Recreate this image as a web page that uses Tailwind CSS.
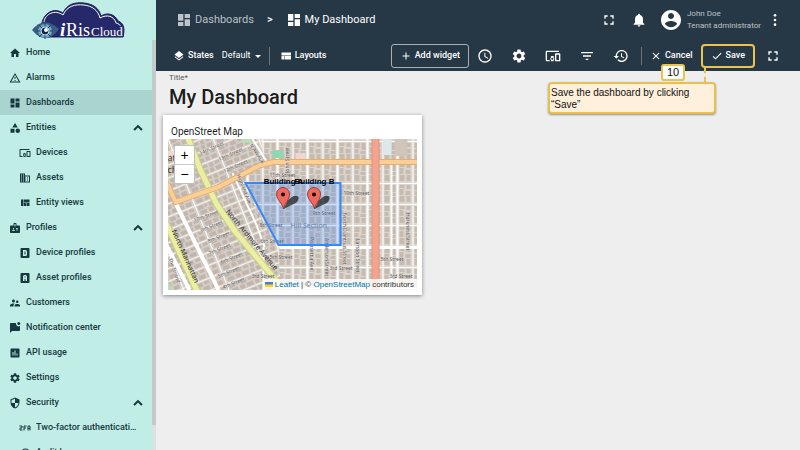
<!DOCTYPE html>
<html lang="en">
  <head>
    <meta charset="utf-8" />
    <meta content="width=device-width, initial-scale=1.0" name="viewport" />
    <title>My Dashboard</title>
    <script src="https://cdn.jsdelivr.net/npm/@tailwindcss/browser@4"></script>
  </head>
  <body class="flex h-screen overflow-hidden bg-[#eeeeee] font-['Roboto',sans-serif]">
    <!-- Icon set -->
    <svg class="hidden">
      <symbol id="home" viewBox="0 0 24 24"><path d="M10 20v-6h4v6h5v-8h3L12 3 2 12h3v8z" /></symbol>
      <symbol id="warning" viewBox="0 0 24 24"><path d="M12 5.99L19.53 19H4.47L12 5.99M12 2L1 21h22L12 2zm1 14h-2v2h2v-2zm0-6h-2v4h2v-4z" /></symbol>
      <symbol id="dashboard" viewBox="0 0 24 24"><path d="M3 13h8V3H3v10zm0 8h8v-6H3v6zm10 0h8V11h-8v10zm0-18v6h8V3h-8z" /></symbol>
      <symbol id="category" viewBox="0 0 24 24"><path d="M12 2l-5.5 9h11zM3 13.5h8v8H3z" /><circle cx="17.5" cy="17.5" r="4.5" /></symbol>
      <symbol id="devices" viewBox="0 0 24 24"><path d="M3 6h18V4H3c-1.1 0-2 .9-2 2v12c0 1.1.9 2 2 2h4v-2H3V6zm10 6H9v1.78c-.61.55-1 1.33-1 2.22s.39 1.67 1 2.22V20h4v-1.78c.61-.55 1-1.34 1-2.22s-.39-1.67-1-2.22V12zm-2 5.5c-.83 0-1.5-.67-1.5-1.5s.67-1.5 1.5-1.5 1.5.67 1.5 1.5-.67 1.5-1.5 1.5zM22 8h-6c-.5 0-1 .5-1 1v10c0 .5.5 1 1 1h6c.5 0 1-.5 1-1V9c0-.5-.5-1-1-1zm-1 10h-4v-8h4v8z" /></symbol>
      <symbol id="domain" viewBox="0 0 24 24"><path d="M12 7V3H2v18h20V7H12zM6 19H4v-2h2v2zm0-4H4v-2h2v2zm0-4H4V9h2v2zm0-4H4V5h2v2zm4 12H8v-2h2v2zm0-4H8v-2h2v2zm0-4H8V9h2v2zm0-4H8V5h2v2zm10 12h-8v-2h2v-2h-2v-2h2v-2h-2V9h8v10zm-2-8h-2v2h2v-2zm0 4h-2v2h2v-2z" /></symbol>
      <symbol id="quilt" viewBox="0 0 24 24"><path d="M10 18h5v-6h-5v6zm-6 0h5V5H4v13zm12 0h5v-6h-5v6zM10 5v6h11V5H10z" /></symbol>
      <symbol id="badge" viewBox="0 0 24 24"><path d="M20 7h-5V4c0-1.1-.9-2-2-2h-2c-1.1 0-2 .9-2 2v3H4c-1.1 0-2 .9-2 2v11c0 1.1.9 2 2 2h16c1.1 0 2-.9 2-2V9c0-1.1-.9-2-2-2zM9 12c.83 0 1.5.67 1.5 1.5S9.83 15 9 15s-1.5-.67-1.5-1.5S8.17 12 9 12zm3 6H6v-.75c0-1 2-1.5 3-1.5s3 .5 3 1.5V18zm1-9h-2V4h2v5zm5 7.5h-4V15h4v1.5zm0-3h-4V12h4v1.5z" /></symbol>
      <symbol id="alpha-d" viewBox="0 0 24 24"><path fill-rule="evenodd" d="M5 2h14a2 2 0 0 1 2 2v16a2 2 0 0 1-2 2H5a2 2 0 0 1-2-2V4a2 2 0 0 1 2-2zm3 4v12h5a3 3 0 0 0 3-3V9a3 3 0 0 0-3-3zm3 3h2v6h-2z" /></symbol>
      <symbol id="alpha-a" viewBox="0 0 24 24"><path fill-rule="evenodd" d="M5 2h14a2 2 0 0 1 2 2v16a2 2 0 0 1-2 2H5a2 2 0 0 1-2-2V4a2 2 0 0 1 2-2zm6 4a3 3 0 0 0-3 3v9h3v-4h2v4h3V9a3 3 0 0 0-3-3zm0 3h2v2h-2z" /></symbol>
      <symbol id="people" viewBox="0 0 24 24"><path d="M16.5 12c1.38 0 2.49-1.12 2.49-2.5S17.88 7 16.5 7 14 8.12 14 9.5s1.12 2.5 2.5 2.5zM9 11c1.66 0 2.99-1.34 2.99-3S10.66 5 9 5 6 6.34 6 8s1.34 3 3 3zm7.5 3c-1.83 0-5.5.92-5.5 2.75V19h11v-2.25c0-1.83-3.67-2.75-5.5-2.75zM9 13c-2.33 0-7 1.17-7 3.5V19h7v-2.25c0-.85.33-2.34 2.37-3.47C10.5 13.1 9.66 13 9 13z" /></symbol>
      <symbol id="chat" viewBox="0 0 24 24"><path d="M22 7.5V16c0 1.1-.9 2-2 2H6l-4 4V4c0-1.1.9-2 2-2h10.1A5 5 0 0 0 22 7.5z" /><circle cx="19.5" cy="3" r="3" /></symbol>
      <symbol id="chart" viewBox="0 0 24 24"><path d="M19 3H5c-1.1 0-2 .9-2 2v14c0 1.1.9 2 2 2h14c1.1 0 2-.9 2-2V5c0-1.1-.9-2-2-2zM9 17H7v-7h2v7zm4 0h-2V7h2v10zm4 0h-2v-4h2v4z" /></symbol>
      <symbol id="settings" viewBox="0 0 24 24"><path d="M19.14 12.94c.04-.3.06-.61.06-.94 0-.32-.02-.64-.07-.94l2.03-1.58c.18-.14.23-.41.12-.61l-1.92-3.32c-.12-.22-.37-.29-.59-.22l-2.39.96c-.5-.38-1.03-.7-1.62-.94l-.36-2.54c-.04-.24-.24-.41-.48-.41h-3.84c-.24 0-.43.17-.47.41l-.36 2.54c-.59.24-1.13.57-1.62.94l-2.39-.96c-.22-.08-.47 0-.59.22L2.74 8.87c-.12.21-.08.47.12.61l2.03 1.58c-.05.3-.09.63-.09.94s.02.64.07.94l-2.03 1.58c-.18.14-.23.41-.12.61l1.92 3.32c.12.22.37.29.59.22l2.39-.96c.5.38 1.03.7 1.62.94l.36 2.54c.05.24.24.41.48.41h3.84c.24 0 .44-.17.47-.41l.36-2.54c.59-.24 1.13-.56 1.62-.94l2.39.96c.22.08.47 0 .59-.22l1.92-3.32c.12-.22.07-.47-.12-.61l-2.01-1.58zM12 15.6c-1.98 0-3.6-1.62-3.6-3.6s1.62-3.6 3.6-3.6 3.6 1.62 3.6 3.6-1.62 3.6-3.6 3.6z" /></symbol>
      <symbol id="security" viewBox="0 0 24 24"><path d="M12 1L3 5v6c0 5.55 3.84 10.74 9 12 5.16-1.26 9-6.45 9-12V5l-9-4zm0 10.99h7c-.53 4.12-3.28 7.79-7 8.94V12H5V6.3l7-3.11v8.8z" /></symbol>
      <symbol id="two-fa" viewBox="0 0 24 24"><path fill="none" stroke="currentColor" stroke-width="2" d="M1 8h5v4H2v4h5M15 8h-5v9M10 12h4M18 17V8h4v9M18 13h4" /></symbol>
      <symbol id="audit" viewBox="0 0 24 24"><path d="M13 3a9 9 0 0 0-9 9H1l4 4 4-4H6a7 7 0 1 1 7 7v2a9 9 0 0 0 0-18z" /></symbol>
      <symbol id="up" viewBox="0 0 24 24"><path d="M12 7l-7 7 2.2 2.2L12 11.4l4.800 4.8L19 14z" /></symbol>
      <symbol id="layers" viewBox="0 0 24 24"><path d="M11.99 18.54l-7.37-5.73L3 14.07l9 7 9-7-1.63-1.27-7.38 5.74zM12 16l7.36-5.73L21 9l-9-7-9 7 1.63 1.27L12 16z" /></symbol>
      <symbol id="compact" viewBox="0 0 24 24"><path d="M3 19h6v-7H3v7zm7 0h12v-7H10v7zM3 5v6h19V5H3z" /></symbol>
      <symbol id="add" viewBox="0 0 24 24"><path d="M19 13h-6v6h-2v-6H5v-2h6V5h2v6h6v2z" /></symbol>
      <symbol id="clock" viewBox="0 0 24 24"><path d="M11.99 2C6.47 2 2 6.48 2 12s4.47 10 9.99 10C17.52 22 22 17.52 22 12S17.52 2 11.99 2zM12 20c-4.42 0-8-3.58-8-8s3.58-8 8-8 8 3.58 8 8-3.58 8-8 8zm.5-13H11v6l5.25 3.15.75-1.23-4.5-2.67z" /></symbol>
      <symbol id="filter" viewBox="0 0 24 24"><path d="M10 18h4v-2h-4v2zM3 6v2h18V6H3zm3 7h12v-2H6v2z" /></symbol>
      <symbol id="history" viewBox="0 0 24 24"><path d="M13 3c-4.97 0-9 4.03-9 9H1l3.89 3.89.07.14L9 12H6c0-3.87 3.13-7 7-7s7 3.13 7 7-3.13 7-7 7c-1.93 0-3.68-.79-4.94-2.06l-1.42 1.42C8.27 19.99 10.51 21 13 21c4.97 0 9-4.03 9-9s-4.03-9-9-9zm-1 5v5l4.28 2.54.72-1.21-3.5-2.08V8H12z" /></symbol>
      <symbol id="close" viewBox="0 0 24 24"><path d="M19 6.41L17.59 5 12 10.59 6.41 5 5 6.41 10.59 12 5 17.59 6.41 19 12 13.41 17.59 19 19 17.59 13.41 12z" /></symbol>
      <symbol id="check" viewBox="0 0 24 24"><path d="M9 16.17L4.83 12l-1.42 1.41L9 19 21 7l-1.41-1.41z" /></symbol>
      <symbol id="fullscreen" viewBox="0 0 24 24"><path d="M7 14H5v5h5v-2H7v-3zm-2-4h2V7h3V5H5v5zm12 7h-3v2h5v-5h-2v3zM14 5v2h3v3h2V5h-5z" /></symbol>
      <symbol id="bell" viewBox="0 0 24 24"><path d="M12 22c1.1 0 2-.9 2-2h-4c0 1.1.9 2 2 2zm6-6v-5c0-3.07-1.64-5.64-4.5-6.32V4c0-.83-.67-1.5-1.5-1.5s-1.5.67-1.5 1.5v.68C7.63 5.36 6 7.92 6 11v5l-2 2v1h16v-1l-2-2z" /></symbol>
      <symbol id="account" viewBox="0 0 24 24"><path d="M12 2C6.48 2 2 6.48 2 12s4.48 10 10 10 10-4.48 10-10S17.52 2 12 2zm0 3c1.66 0 3 1.34 3 3s-1.34 3-3 3-3-1.34-3-3 1.34-3 3-3zm0 14.2c-2.5 0-4.71-1.28-6-3.22.03-1.99 4-3.08 6-3.08 1.99 0 5.97 1.09 6 3.08-1.29 1.94-3.5 3.22-6 3.22z" /></symbol>
      <symbol id="more" viewBox="0 0 24 24"><circle cx="12" cy="5" r="2" /><circle cx="12" cy="12" r="2" /><circle cx="12" cy="19" r="2" /></symbol>
    </svg>

    <!-- Sidebar -->
    <aside class="flex w-[156px] shrink-0 flex-col bg-[#c0ede6] text-[#17393e]">
      <a aria-label="iRis Cloud" class="block h-10 shrink-0 pl-8" href="#">
        <svg class="h-10 w-[94px]" viewBox="0 0 94 40">
          <path d="M14 37C9 30 8 23 13 16C18 10 25 9 31 13C35 4 43 2 52 3C61 4 67 8 69 16C75 12 83 14 86 21C92 23 93 29 91 37z" fill="#25296a" stroke="#17204f" />
          <path d="M12 22C13 14 23 9 31 15C35 6 43 4 52 5C60 6 66 10 68 18C75 14 82 16 84 23C89 24 91 29 90 34" fill="none" stroke="#fff" />
          <path d="M0 30Q12 15 27 29Q14 47 0 30z" fill="#3b5c87" />
          <circle cx="13" cy="31" fill="#6fa6c2" r="7" />
          <path d="M13 23v16M5 31h16M7 25l12 12M19 25L7 37" stroke="#24406d" />
          <circle cx="13" cy="31" fill="#142247" r="4" stroke="#bfe4ee" />
          <circle cx="14" cy="30" fill="#fff" r="2" />
          <g fill="#fff" font-family="'Liberation Serif', serif" paint-order="stroke" stroke="#25296a" stroke-width="2">
            <text font-size="19" font-style="italic" font-weight="bold" x="28" y="36">i</text>
            <text font-size="18" x="34" y="36">Ris</text>
            <text font-size="13" x="59" y="36">Cloud</text>
          </g>
        </svg>
      </a>
      <div class="flex min-h-0 grow">
        <nav class="min-w-0 grow overflow-hidden text-[9px] font-medium">
          <a class="flex h-[25px] items-center gap-[5px] pl-[9px]" href="#"><svg class="size-3 fill-current"><use href="#home" /></svg>Home</a>
          <a class="flex h-[25px] items-center gap-[5px] pl-[9px]" href="#"><svg class="size-3 fill-current"><use href="#warning" /></svg>Alarms</a>
          <a class="flex h-[25px] items-center gap-[5px] bg-[#a9d4cf] pl-[9px]" href="#"><svg class="size-3 fill-current"><use href="#dashboard" /></svg>Dashboards</a>
          <a class="flex h-[25px] items-center gap-[5px] pr-1.5 pl-[9px]" href="#"><svg class="size-3 fill-current"><use href="#category" /></svg>Entities<svg class="ml-auto size-4 fill-current"><use href="#up" /></svg></a>
          <a class="flex h-[25px] items-center gap-[5px] pl-[19px]" href="#"><svg class="size-3 fill-current"><use href="#devices" /></svg>Devices</a>
          <a class="flex h-[25px] items-center gap-[5px] pl-[19px]" href="#"><svg class="size-3 fill-current"><use href="#domain" /></svg>Assets</a>
          <a class="flex h-[25px] items-center gap-[5px] pl-[19px]" href="#"><svg class="size-3 fill-current"><use href="#quilt" /></svg>Entity views</a>
          <a class="flex h-[25px] items-center gap-[5px] pr-1.5 pl-[9px]" href="#"><svg class="size-3 fill-current"><use href="#badge" /></svg>Profiles<svg class="ml-auto size-4 fill-current"><use href="#up" /></svg></a>
          <a class="flex h-[25px] items-center gap-[5px] pl-[19px]" href="#"><svg class="size-3 fill-current"><use href="#alpha-d" /></svg>Device profiles</a>
          <a class="flex h-[25px] items-center gap-[5px] pl-[19px]" href="#"><svg class="size-3 fill-current"><use href="#alpha-a" /></svg>Asset profiles</a>
          <a class="flex h-[25px] items-center gap-[5px] pl-[9px]" href="#"><svg class="size-3 fill-current"><use href="#people" /></svg>Customers</a>
          <a class="flex h-[25px] items-center gap-[5px] pl-[9px]" href="#"><svg class="size-3 fill-current"><use href="#chat" /></svg>Notification center</a>
          <a class="flex h-[25px] items-center gap-[5px] pl-[9px]" href="#"><svg class="size-3 fill-current"><use href="#chart" /></svg>API usage</a>
          <a class="flex h-[25px] items-center gap-[5px] pl-[9px]" href="#"><svg class="size-3 fill-current"><use href="#settings" /></svg>Settings</a>
          <a class="flex h-[25px] items-center gap-[5px] pr-1.5 pl-[9px]" href="#"><svg class="size-3 fill-current"><use href="#security" /></svg>Security<svg class="ml-auto size-4 fill-current"><use href="#up" /></svg></a>
          <a class="flex h-[25px] items-center gap-[5px] pr-3 pl-[19px]" href="#"><svg class="size-3 shrink-0 fill-current"><use href="#two-fa" /></svg><span class="truncate">Two-factor authentication</span></a>
          <a class="flex h-[25px] items-center gap-[5px] pl-[19px]" href="#"><svg class="size-3 fill-current"><use href="#audit" /></svg>Audit logs</a>
        </nav>
        <div class="w-1 shrink-0 bg-[#d9e3e2]"><div class="h-[94%] bg-[#c3cbcb]"></div></div>
      </div>
    </aside>

    <main class="relative min-w-0 grow">
      <header class="bg-[#263845] text-white">
        <!-- Breadcrumbs and user -->
        <div class="flex h-10 items-center pr-[17px] pl-5">
          <div class="flex items-center gap-[3px] text-[11px]">
            <a class="flex items-center gap-[3px] text-white/70" href="#"><svg class="size-4 fill-current"><use href="#dashboard" /></svg>Dashboards</a>
            <span class="px-2.5 font-medium">&gt;</span>
            <a class="flex items-center gap-[3px]" href="#"><svg class="size-4 fill-current"><use href="#dashboard" /></svg>My Dashboard</a>
          </div>
          <div class="ml-auto flex items-center">
            <button aria-label="Fullscreen" class="mr-3.5"><svg class="size-4 fill-current"><use href="#fullscreen" /></svg></button>
            <button aria-label="Notifications" class="mr-3"><svg class="size-4 fill-current"><use href="#bell" /></svg></button>
            <svg class="mr-1 size-6 fill-current"><use href="#account" /></svg>
            <div class="mr-1.5 text-[8px] leading-3 text-white/70"><p>John Doe</p><p>Tenant administrator</p></div>
            <button aria-label="More"><svg class="size-4 fill-current"><use href="#more" /></svg></button>
          </div>
        </div>
        <!-- Dashboard toolbar -->
        <div class="flex h-[31px] items-center pt-px pr-[19px] pl-[17px] text-[9px] font-medium">
          <button class="flex items-center gap-[3px]"><svg class="size-3 fill-current"><use href="#layers" /></svg>States</button>
          <select aria-label="State" class="ml-2 appearance-none font-normal"><option>Default</option></select>
          <svg class="ml-1 h-[3px] w-1.5 fill-current" viewBox="0 0 6 3"><path d="M0 0h6L3 3z" /></svg>
          <div class="mr-2.5 ml-2 h-[18px] w-px bg-white/30"></div>
          <button class="flex items-center gap-[3px]"><svg class="size-3 fill-current"><use href="#compact" /></svg>Layouts</button>
          <div class="ml-auto flex items-center">
            <button class="mr-2 flex h-6 items-center gap-[3px] rounded-[3px] border border-white/60 px-2"><svg class="size-3 fill-current"><use href="#add" /></svg>Add widget</button>
            <div class="flex gap-[18px]">
              <button aria-label="Time window"><svg class="size-4 fill-current"><use href="#clock" /></svg></button>
              <button aria-label="Settings"><svg class="size-4 fill-current"><use href="#settings" /></svg></button>
              <button aria-label="Entity aliases"><svg class="size-4 fill-current"><use href="#devices" /></svg></button>
              <button aria-label="Filters"><svg class="size-4 fill-current"><use href="#filter" /></svg></button>
              <button aria-label="Versions"><svg class="size-4 fill-current"><use href="#history" /></svg></button>
            </div>
            <div class="mr-2 ml-3 h-[18px] w-px bg-white/30"></div>
            <button class="mr-2 flex items-center gap-[3px]"><svg class="size-3 fill-current"><use href="#close" /></svg>Cancel</button>
            <button class="mr-2.5 flex h-6 items-center gap-[3px] rounded-[4px] border-2 border-[#e9c44f] px-2"><svg class="size-3 fill-current"><use href="#check" /></svg>Save</button>
            <button aria-label="Expand dashboard"><svg class="size-4 fill-current"><use href="#fullscreen" /></svg></button>
          </div>
        </div>
      </header>

      <section class="px-[7px]">
        <div class="flex flex-col px-1.5 pt-0.5">
          <label class="text-[8px] leading-[10px] text-black/70" for="title">Title*</label>
          <input class="h-7 w-full text-[20px] font-medium text-black/90 outline-none" id="title" type="text" value="My Dashboard" />
        </div>

        <!-- Map widget -->
        <div class="mt-1 w-[259px] bg-white px-[5px] pt-[9px] pb-[5px] shadow-[0_1px_4px_rgba(0,0,0,0.45)]">
          <h2 class="pl-[3px] text-[10px] leading-[15px] text-black/90">OpenStreet Map</h2>
          <div class="relative">
            <svg class="block h-[151px] w-full" preserveAspectRatio="xMidYMid slice" viewBox="0 0 250 151">
              <defs>
                <pattern height="21" id="blocks" patternUnits="userSpaceOnUse" width="30" x="5" y="23">
                  <rect fill="#dcd5cd" height="21" width="30" />
                  <path d="M2 2h5v5H2zM2 8h4v4H2zM2 13h5v6H2zM9 2h4v7H9zM8 10h5v3H8zM9 14h4v5H9zM17 2h5v3h-5zM17 6h4v6h-4zM17 13h5v6h-5zM24 2h4v4h-4zM23 8h5v4h-5zM24 13h4v6h-4z" fill="#c6bbb1" />
                  <path d="M0 0v21M0 0h30M15 0v21" stroke="#fff" stroke-width="2" />
                </pattern>
                <pattern height="12" id="blocks-left" patternTransform="rotate(-22)" patternUnits="userSpaceOnUse" width="42">
                  <rect fill="#d6cec6" height="12" width="42" />
                  <path d="M2 2h6v4H2zM9 2h3v3H9zM14 2h6v4h-6zM22 2h5v3h-5zM29 2h4v4h-4zM35 2h5v3h-5zM3 7h7v4H3zM12 7h5v4h-5zM19 7h7v4h-7zM28 7h4v4h-4zM34 7h6v4h-6z" fill="#c1b6ad" />
                  <path d="M0 0h42" stroke="#f6f3f0" stroke-width="2" />
                  <path d="M0 0v12" stroke="#fff" stroke-width="2" />
                </pattern>
              </defs>
              <rect fill="url(#blocks)" height="151" width="250" />
              <path d="M0 0h93l5 26-25 14 37 70 4 41H0z" fill="url(#blocks-left)" />
              <path d="M105 11h11v8h-11z" fill="#92d7b4" />
              <path d="M75 0h10v4H75zM0 141l5 10H0z" fill="#b5e0b4" />
              <path d="M0 12h6v10H0zM128 14h10v7h-10z" fill="#f0d5d0" />
              <path d="M215 0h9v16h-9z" fill="#dfe8e8" />
              <path d="M227 0h13v17h-13z" fill="#d0c5b8" />
              <!-- White streets -->
              <g fill="none" stroke="#fff">
                <path d="M8 64l43 87M-2 104l24 47" stroke-width="4" />
                <path d="M85 0l15 24M65 34l24 52 8 22M224 24v127M96 108v43" stroke-width="2" />
                <path d="M112 109h138" stroke-width="2" />
              </g>
              <!-- Main roads -->
              <g fill="none" stroke-linejoin="round">
                <path d="M20-2l13 33 16 34 19 28 41 49 6 12M-1 85l31 68" stroke="#c9cf82" stroke-width="7" />
                <path d="M20-2l13 33 16 34 19 28 41 49 6 12M-1 85l31 68" stroke="#eaefa3" stroke-width="5" />
                <path d="M0 45l8 18 43-15 42-22 13-3h145" stroke="#e0ae76" stroke-width="6" />
                <path d="M0 45l8 18 43-15 42-22 13-3h145" stroke="#fbcf94" stroke-width="4" />
                <path d="M208-1v153" stroke="#e39480" stroke-width="8" />
                <path d="M208-1v153" stroke="#f4a38f" stroke-width="6" />
              </g>
              <!-- Street names -->
              <g fill="#555" font-family="'Noto Sans', sans-serif" font-size="5" paint-order="stroke" stroke="#ece7e2" stroke-opacity=".5" stroke-width="1">
                <text transform="translate(33 16) rotate(-24)">14th Street</text>
                <text transform="translate(52 22) rotate(-24)">13th Street</text>
                <text transform="translate(57 34) rotate(-24)">12th Street</text>
                <text transform="translate(27 83) rotate(-20)">10th Street</text>
                <text transform="translate(34 93) rotate(-22)">9th Street</text>
                <text transform="translate(41 104) rotate(-22)">8th Street</text>
                <text transform="translate(42 116) rotate(-22)">7th Street</text>
                <text transform="translate(54 125) rotate(-22)">6th Street</text>
                <text transform="translate(51 139) rotate(-22)">5th Street</text>
                <text transform="translate(56 150) rotate(-22)">4th Street</text>
                <text transform="translate(1 120) rotate(70)">The Strand</text>
                <text transform="translate(69 36) rotate(68)">Highland Ave</text>
                <text transform="translate(82 6) rotate(58)">N Avenue</text>
                <text transform="translate(121 34) rotate(-90)">John Street</text>
                <text x="102" y="38">11th Street</text>
                <text x="176" y="56">10th Street</text>
                <text x="92" y="88">8th Street</text>
                <text x="145" y="76">9th Street</text>
                <text x="93" y="104">6th Street</text>
                <text x="102" y="120">5th Street</text>
                <text x="213" y="122">5th Street</text>
                <text x="162" y="131">3rd Street</text>
                <text x="222" y="139">3rd Street</text>
                <text x="84" y="139">3rd Street</text>
                <text transform="translate(175 74) rotate(90)">North Dianthus Street</text>
                <text transform="translate(157 99) rotate(90)">Anderson Street</text>
                <text transform="translate(142 98) rotate(90)">Poinsettia Ave</text>
                <text transform="translate(188 100) rotate(90)">Larsson Street</text>
                <text transform="translate(238 74) rotate(90)">Harkness Street</text>
              </g>
              <g fill="#333" font-family="'Noto Sans', sans-serif" font-size="7">
                <text transform="translate(58 73) rotate(50)">North Ardmore Avenue</text>
                <text transform="translate(4 92) rotate(66)">North Manhattan</text>
                <text fill="#7d7d8c" x="123" y="89">Hill Section</text>
                <text font-size="9" x="0" y="22">at</text>
                <text font-size="9" x="0" y="34">ch</text>
              </g>
              <path d="M78 44h95v62h-62z" fill="#3388ff" fill-opacity=".25" stroke="#3388ff" stroke-width="2" />
              <!-- Markers -->
              <g id="pin">
                <path d="M116 70l4-8q7-8 11-4 1 5-7 8z" fill="#222" fill-opacity=".75" />
                <path d="M116 70C115 64 109 61 109 55a6 6 0 0 1 13 0C122 61 117 64 116 70z" fill="#f2695c" stroke="#8d2a25" stroke-width=".8" />
                <circle cx="115.5" cy="55.5" r="2" />
              </g>
              <use href="#pin" x="31" />
              <g font-family="'Liberation Sans', sans-serif" font-size="8" font-weight="bold" text-anchor="middle">
                <text x="116" y="45">Building A</text>
                <text x="147" y="45">Building B</text>
              </g>
            </svg>
            <div class="absolute top-1.5 left-1.5 flex w-[21px] flex-col rounded-[2px] border border-black/25 bg-white font-['Liberation_Sans',sans-serif] text-[14px] leading-[18px]">
              <button aria-label="Zoom in" class="h-[19px] border-b border-[#ccc]">+</button>
              <button aria-label="Zoom out" class="h-[18px]">−</button>
            </div>
            <div class="absolute right-0 bottom-0 flex items-center gap-0.5 bg-white/80 pr-[3px] pl-0.5 font-['Liberation_Sans',sans-serif] text-[8px] leading-[11px] whitespace-nowrap text-[#333]">
              <svg class="h-[5px] w-2" viewBox="0 0 8 5"><path d="M0 0h8v3H0z" fill="#4c7be1" /><path d="M0 2.5h8V5H0z" fill="#ffd500" /></svg>
              <p><a class="text-[#0078a8]" href="#">Leaflet</a> | © <a class="text-[#0078a8]" href="#">OpenStreetMap</a> contributors</p>
            </div>
          </div>
        </div>
      </section>

      <!-- Step callout -->
      <div class="absolute top-[68px] right-[84px] w-[168px] font-['Liberation_Sans',sans-serif] text-[10px] leading-3 text-[#111]">
        <div class="ml-auto h-[14px] w-3 border-l-2 border-dashed border-[#e9c44f]"></div>
        <p class="rounded-[4px] border-2 border-[#e9c04f] bg-[#fff0dc] px-px pt-[3px] pb-px shadow-[0_1px_2px_rgba(0,0,0,0.4)]">Save the dashboard by clicking “Save”</p>
        <span class="absolute -top-1 left-[113px] w-6 rounded-[3px] border-2 border-[#e9c44f] bg-white text-center text-[11px] leading-[13px]">10</span>
      </div>
    </main>
  </body>
</html>
